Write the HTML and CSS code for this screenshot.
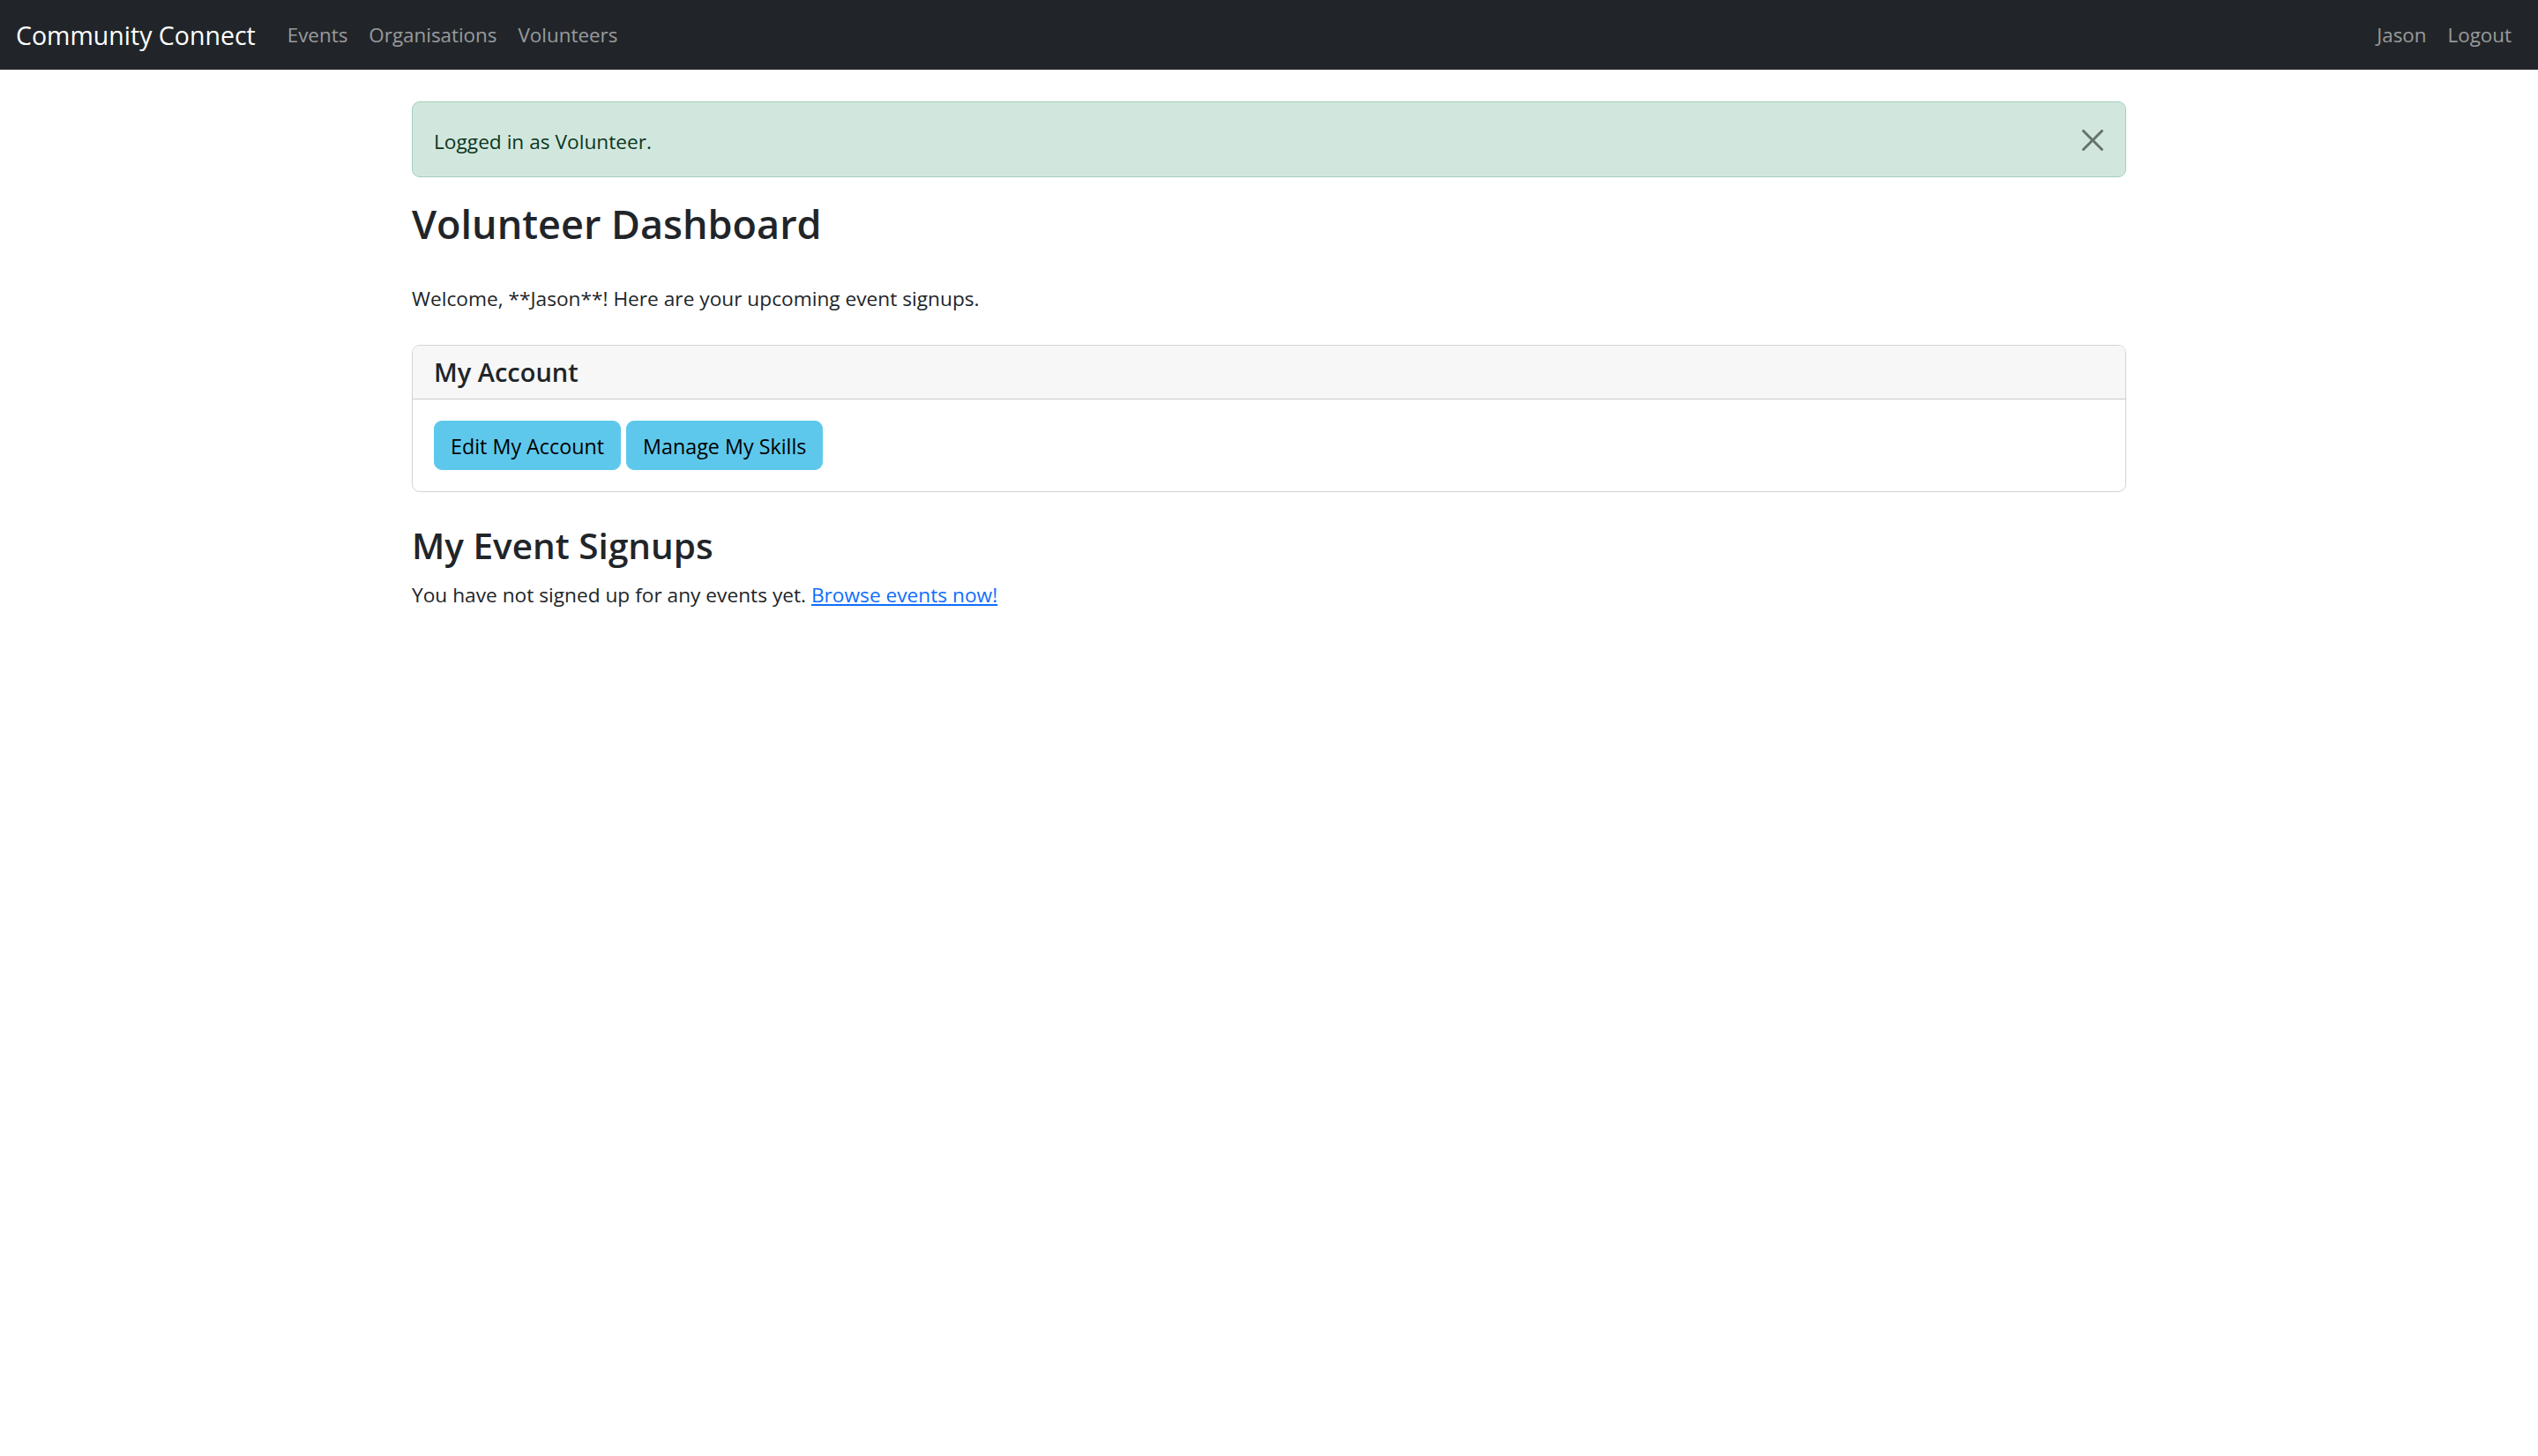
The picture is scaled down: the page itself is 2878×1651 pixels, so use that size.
FILE: index.html
```html
<!DOCTYPE html>
<html lang="en">
<head>
<meta charset="utf-8">
<title>Volunteer Dashboard - Community Connect</title>
<link rel="stylesheet" href="styles.css">
</head>
<body>
<nav class="navbar">
  <a class="brand" href="#">Community Connect</a>
  <ul class="nav">
    <li><a class="nav-link" href="#">Events</a></li>
    <li><a class="nav-link" href="#">Organisations</a></li>
    <li><a class="nav-link" href="#">Volunteers</a></li>
  </ul>
  <ul class="nav nav-right">
    <li><a class="nav-link" href="#">Jason</a></li>
    <li><a class="nav-link" href="#">Logout</a></li>
  </ul>
</nav>
<main class="container">
  <div class="alert">
    Logged in as Volunteer.
    <button class="btn-close" type="button" aria-label="Close">
      <svg viewBox="0 0 16 16" width="24" height="24"><path d="M.293.293a1 1 0 0 1 1.414 0L8 6.586 14.293.293a1 1 0 1 1 1.414 1.414L9.414 8l6.293 6.293a1 1 0 0 1-1.414 1.414L8 9.414l-6.293 6.293a1 1 0 0 1-1.414-1.414L6.586 8 .293 1.707a1 1 0 0 1 0-1.414z"/></svg>
    </button>
  </div>
  <h1 class="title">Volunteer Dashboard</h1>
  <p class="lead-text">Welcome, **Jason**! Here are your upcoming event signups.</p>
  <section class="card">
    <div class="card-header"><h5 class="card-title">My Account</h5></div>
    <div class="card-body">
      <a class="btn" href="#">Edit My Account</a>
      <a class="btn" href="#">Manage My Skills</a>
    </div>
  </section>
  <h3 class="section-title">My Event Signups</h3>
  <p class="text">You have not signed up for any events yet. <a class="link" href="#">Browse events now!</a></p>
</main>
</body>
</html>
```
FILE: styles.css
```css
* { box-sizing: border-box; }
html, body { margin: 0; padding: 0; }
body {
  font-family: "Open Sans", "Noto Sans", sans-serif;
  font-size: 22.7px;
  line-height: 36px;
  color: #212529;
  background: #fff;
}
.navbar {
  height: 79px;
  background: #212529;
  display: flex;
  align-items: center;
  padding: 0 18px;
}
.brand {
  color: #fff;
  text-decoration: none;
  font-size: 28.5px;
  line-height: 40px;
  margin-right: 24px;
}
.nav {
  list-style: none;
  margin: 0;
  padding: 0;
  display: flex;
}
.nav-right { margin-left: auto; }
.nav-link {
  display: block;
  padding: 0 12px;
  color: rgba(255, 255, 255, 0.55);
  text-decoration: none;
  font-size: 22.4px;
  line-height: 36px;
}
.container {
  width: 1944px;
  margin: 0 auto;
}
.alert {
  position: relative;
  margin: 36px 0 24px;
  padding: 27px 72px 21px 24px;
  border: 1px solid #a3cfbb;
  border-radius: 9px;
  background: #d1e7dd;
  color: #0a3622;
}
.btn-close {
  position: absolute;
  top: 30px;
  right: 24px;
  width: 26px;
  height: 26px;
  padding: 1px;
  border: 0;
  background: transparent;
  opacity: 0.5;
  display: flex;
  align-items: center;
  justify-content: center;
  cursor: pointer;
}
.btn-close svg { display: block; fill: #000; }
.title {
  font-size: 45px;
  line-height: 57.6px;
  font-weight: 600;
  margin: 0 0 38px;
}
.lead-text { margin: 0 0 34px; }
.card {
  border: 1px solid rgba(0, 0, 0, 0.175);
  border-radius: 9px;
  margin-bottom: 36px;
  overflow: hidden;
}
.card-header {
  padding: 12px 24px;
  background: #f7f7f7;
  border-bottom: 1px solid rgba(0, 0, 0, 0.175);
}
.card-title {
  margin: 0;
  font-size: 29px;
  line-height: 36px;
  font-weight: 600;
}
.card-body {
  padding: 24px;
  display: flex;
  gap: 6px;
}
.btn {
  display: inline-block;
  padding: 10px 18px 8px;
  border: 1px solid #5ec8ec;
  border-radius: 9px;
  background: #5ec8ec;
  color: #000;
  text-decoration: none;
  font-size: 23.3px;
  line-height: 36px;
}
.section-title {
  font-size: 40.5px;
  line-height: 50.4px;
  font-weight: 600;
  margin: 0 0 13px;
}
.text { margin: 0 0 24px; }
.link { color: #0d6efd; text-decoration: underline; }
```
